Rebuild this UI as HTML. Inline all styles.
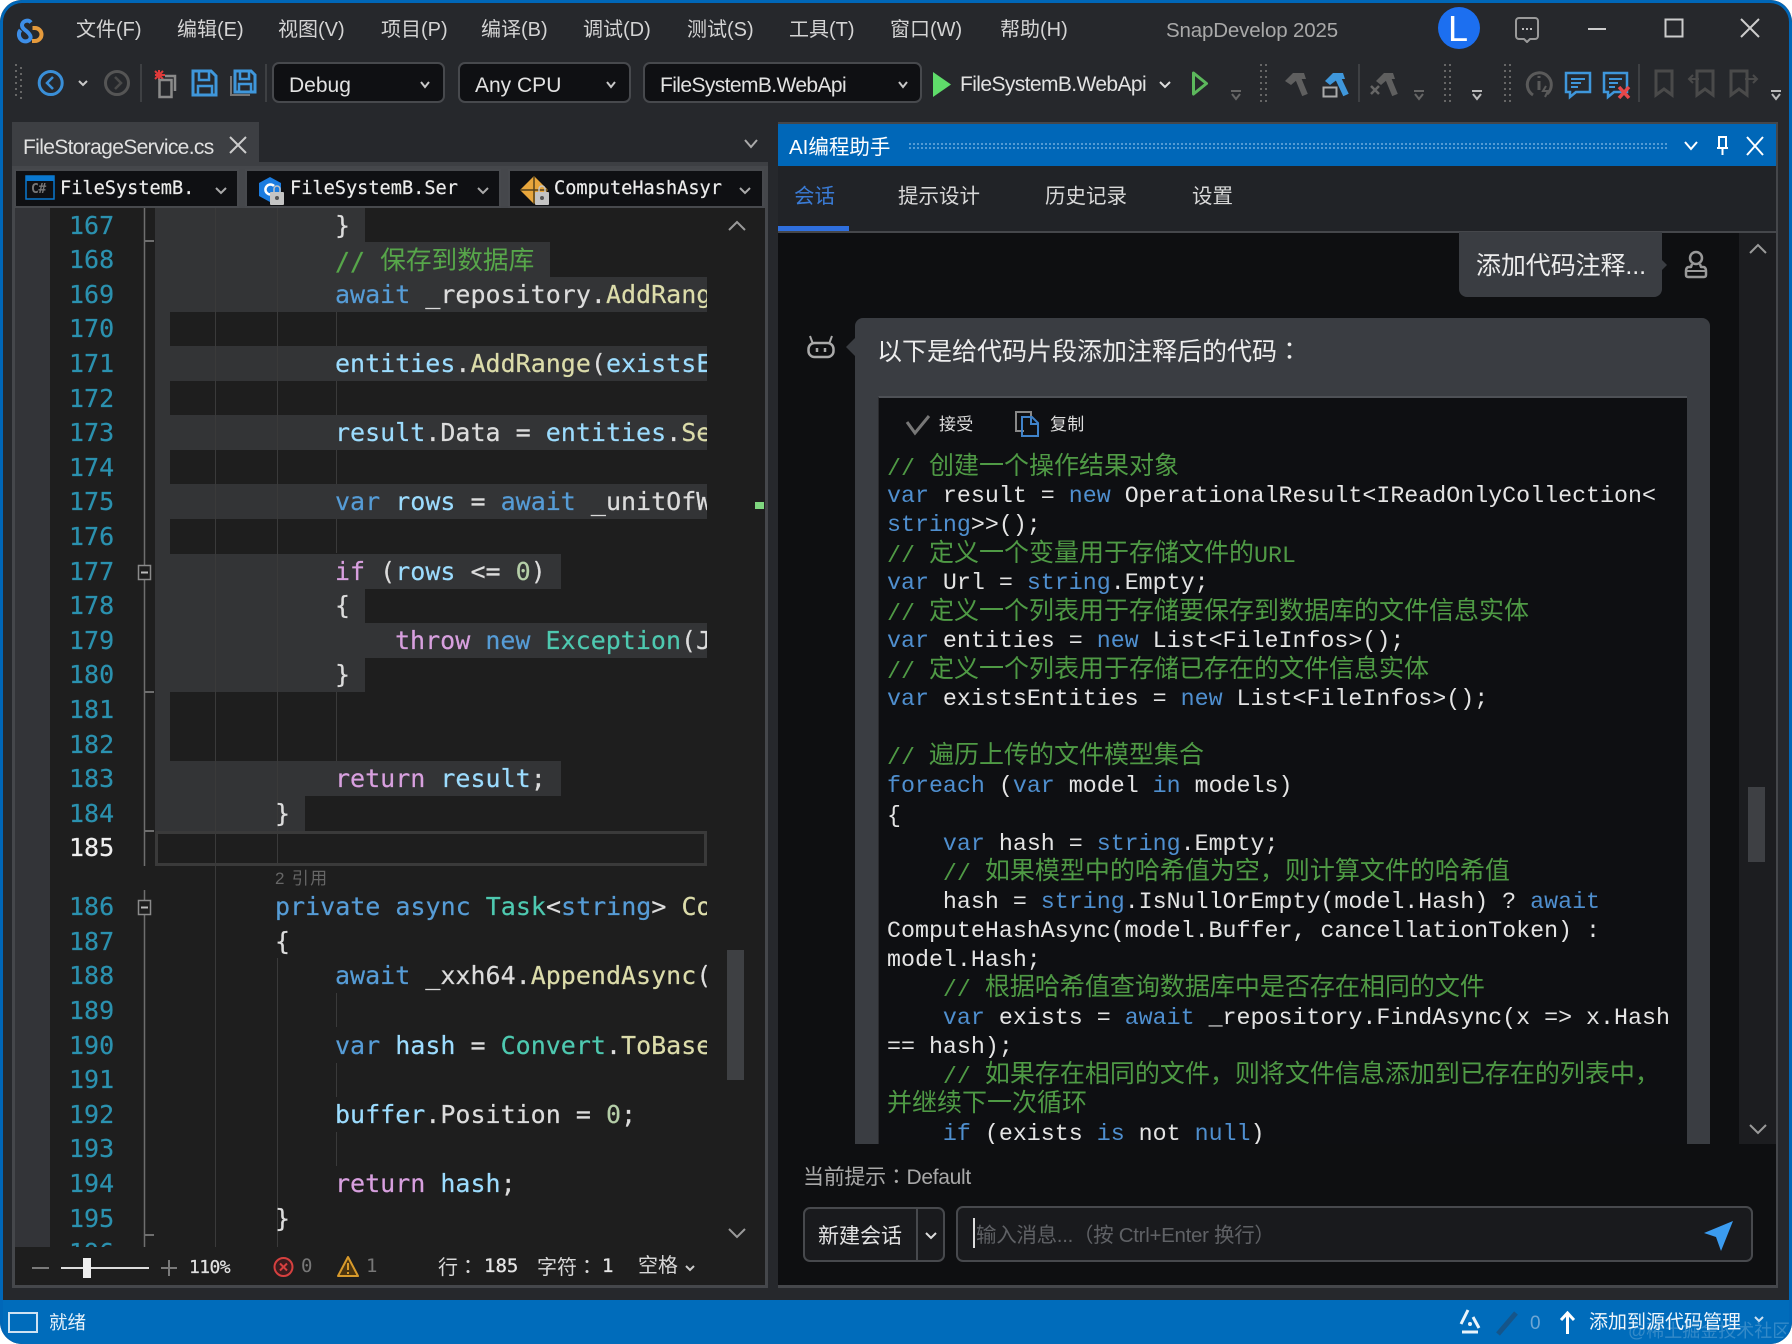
<!DOCTYPE html>
<html lang="zh"><head><meta charset="utf-8"><title>SnapDevelop 2025</title>
<style>
html,body{margin:0;padding:0;background:#fff}
#w{position:absolute;left:0;top:0;width:1792px;height:1344px;overflow:hidden;background:#26282c;border-radius:22px;font-family:"Liberation Sans","Noto Sans CJK SC",sans-serif;color:#d8d8d8}
#w div,#w span.a,#w svg{position:absolute}
.t{white-space:nowrap;line-height:1}
.m{font-size:20px;top:20px;color:#d4d4d4}
.dd{background:#0f1013;border:2px solid #47494d;border-radius:7px;box-sizing:border-box;top:62px;height:41px}
.ddt{font-size:21px;top:75px;color:#e2e2e2;white-space:nowrap;line-height:1}
.nav{background:#0f1013;border:2px solid #47494d;box-sizing:border-box;top:169px;height:39px}
.navt{font:18.6px/1 "DejaVu Sans Mono",monospace;top:180px;color:#ececec;white-space:pre;-webkit-text-stroke:.2px #ececec}
.sel{background:#333436;height:35px}
.g{width:1px;background:#3a3a3a}
.n{left:69px;font:25px/35px "DejaVu Sans Mono",monospace;color:#2b91af;height:35px;white-space:pre;-webkit-text-stroke:.2px #2b91af}
.l{font:25px/35px "DejaVu Sans Mono","Noto Sans CJK SC",monospace;color:#dcdcdc;white-space:pre;height:35px;-webkit-text-stroke:.2px}
.k{color:#569cd6}.f{color:#d8a0df}.v{color:#9cdcfe}.y{color:#dcdcaa}.e{color:#4ec9b0}.u{color:#b5cea8}.c{color:#57a64a}
.c b{font-weight:normal;font-family:"Noto Sans CJK SC",sans-serif}
#ed .c b{font-size:25.7px;position:relative;top:-1px;-webkit-text-stroke:0}
.cl{left:32px;font:23.3px/30px "Liberation Mono","Noto Sans CJK SC",monospace;color:#e4e4e4;white-space:pre;height:30px}
.cl .k{color:#4f8fcf}
.cl .c{color:#4f9a45}
.cl .c b{font-size:25px;position:relative;top:-1px}
.tab{font-size:20.5px;top:187px;color:#d8d8d8}
.tc{font-family:"Noto Sans CJK TC",sans-serif}
</style></head><body>
<div id="w">

<!-- menu -->
<div class="t m" style="left:76px">文件(F)</div>
<div class="t m" style="left:177px">编辑(E)</div>
<div class="t m" style="left:278px">视图(V)</div>
<div class="t m" style="left:381px">项目(P)</div>
<div class="t m" style="left:481px">编译(B)</div>
<div class="t m" style="left:583px">调试(D)</div>
<div class="t m" style="left:687px">测试(S)</div>
<div class="t m" style="left:789px">工具(T)</div>
<div class="t m" style="left:890px">窗口(W)</div>
<div class="t m" style="left:1000px">帮助(H)</div>
<div class="t m" style="left:1166px;color:#a9a9a9;top:21px;font-size:20.5px;letter-spacing:-.15px">SnapDevelop 2025</div>
<div style="left:1438px;top:7px;width:42px;height:42px;border-radius:50%;background:#1c6ff0"></div>
<div class="t" style="left:1448px;top:11px;font-size:36px;color:#fff">L</div>

<!-- toolbar dropdowns -->
<div class="dd" style="left:272px;width:173px"></div>
<div class="dd" style="left:458px;width:173px"></div>
<div class="dd" style="left:643px;width:279px"></div>
<div class="ddt" style="left:289px">Debug</div>
<div class="ddt" style="left:475px">Any CPU</div>
<div class="ddt" style="left:660px;letter-spacing:-.6px">FileSystemB.WebApi</div>
<div class="ddt" style="left:960px;letter-spacing:-.6px;top:74px">FileSystemB.WebApi</div>

<!-- tab well -->
<div style="left:12px;top:122px;width:247px;height:42px;background:#3d3f43"></div>
<div class="t" style="left:23px;top:137px;font-size:21px;color:#e0e0e0;letter-spacing:-.65px">FileStorageService.cs</div>
<div style="left:12px;top:162px;width:756px;height:7px;background:#3d3f43"></div>

<!-- editor panel -->
<div style="left:12px;top:166px;width:756px;height:1122px;background:#45474b"></div>
<div style="left:15px;top:208px;width:750px;height:1077px;background:#1e1e1e"></div>
<div style="left:15px;top:208px;width:35px;height:1039px;background:#333438"></div>

<div id="ed" style="left:0;top:207.7px;width:707px;height:1039.300px;overflow:hidden">
 <div class="sel" style="left:155px;top:0;width:210px"></div>
 <div class="sel" style="left:155px;top:34.6px;width:395px"></div>
 <div class="sel" style="left:155px;top:69.2px;width:552px"></div>
 <div class="sel" style="left:155px;top:103.8px;width:15px"></div>
 <div class="sel" style="left:155px;top:138.4px;width:552px"></div>
 <div class="sel" style="left:155px;top:173px;width:15px"></div>
 <div class="sel" style="left:155px;top:207.6px;width:552px"></div>
 <div class="sel" style="left:155px;top:242.2px;width:15px"></div>
 <div class="sel" style="left:155px;top:276.8px;width:552px"></div>
 <div class="sel" style="left:155px;top:311.4px;width:15px"></div>
 <div class="sel" style="left:155px;top:346px;width:406px"></div>
 <div class="sel" style="left:155px;top:380.6px;width:210px"></div>
 <div class="sel" style="left:155px;top:415.2px;width:552px"></div>
 <div class="sel" style="left:155px;top:449.8px;width:210px"></div>
 <div class="sel" style="left:155px;top:484.4px;width:15px"></div>
 <div class="sel" style="left:155px;top:519px;width:15px"></div>
 <div class="sel" style="left:155px;top:553.6px;width:406px"></div>
 <div class="sel" style="left:155px;top:588.2px;width:150px"></div>
 <div style="left:155px;top:623px;width:552px;height:35px;box-sizing:border-box;border:3px solid #3a3a3a"></div>

 <div class="g" style="left:215px;top:0;height:1040px"></div>
 <div class="g" style="left:277px;top:0;height:658px"></div>
 <div class="g" style="left:277px;top:750px;height:289px"></div>
 <div class="g" style="left:336px;top:104px;height:34px"></div>
 <div class="g" style="left:336px;top:173px;height:34px"></div>
 <div class="g" style="left:336px;top:242px;height:34px"></div>
 <div class="g" style="left:336px;top:311px;height:34px"></div>
 <div class="g" style="left:336px;top:484px;height:69px"></div>
 <div class="g" style="left:336px;top:785px;height:34px"></div>
 <div class="g" style="left:336px;top:855px;height:34px"></div>
 <div class="g" style="left:336px;top:924px;height:34px"></div>

 <div class="n" style="top:0">167</div>
 <div class="n" style="top:34.6px">168</div>
 <div class="n" style="top:69.2px">169</div>
 <div class="n" style="top:103.8px">170</div>
 <div class="n" style="top:138.4px">171</div>
 <div class="n" style="top:173px">172</div>
 <div class="n" style="top:207.6px">173</div>
 <div class="n" style="top:242.2px">174</div>
 <div class="n" style="top:276.8px">175</div>
 <div class="n" style="top:311.4px">176</div>
 <div class="n" style="top:346px">177</div>
 <div class="n" style="top:380.6px">178</div>
 <div class="n" style="top:415.2px">179</div>
 <div class="n" style="top:449.8px">180</div>
 <div class="n" style="top:484.4px">181</div>
 <div class="n" style="top:519px">182</div>
 <div class="n" style="top:553.6px">183</div>
 <div class="n" style="top:588.2px">184</div>
 <div class="n" style="top:622.8px;color:#eee;-webkit-text-stroke:.2px #eee">185</div>
 <div class="n" style="top:681.6px">186</div>
 <div class="n" style="top:716.2px">187</div>
 <div class="n" style="top:750.8px">188</div>
 <div class="n" style="top:785.4px">189</div>
 <div class="n" style="top:820px">190</div>
 <div class="n" style="top:854.6px">191</div>
 <div class="n" style="top:889.2px">192</div>
 <div class="n" style="top:923.8px">193</div>
 <div class="n" style="top:958.4px">194</div>
 <div class="n" style="top:993px">195</div>
 <div class="n" style="top:1027.6px">196</div>

 <div class="l" style="left:335px;top:0">}</div>
 <div class="l" style="left:335px;top:34.6px"><span class="c">// <b>保存到数据库</b></span></div>
 <div class="l" style="left:335px;top:69.2px"><span class="k">await</span> _repository.<span class="y">AddRange</span>(</div>
 <div class="l" style="left:335px;top:138.4px"><span class="v">entities</span>.<span class="y">AddRange</span>(<span class="v">existsEntities</span></div>
 <div class="l" style="left:335px;top:207.6px"><span class="v">result</span>.Data = <span class="v">entities</span>.<span class="y">Select</span></div>
 <div class="l" style="left:335px;top:276.8px"><span class="k">var</span> <span class="v">rows</span> = <span class="k">await</span> _unitOfWork</div>
 <div class="l" style="left:335px;top:346px"><span class="f">if</span> (<span class="v">rows</span> &lt;= <span class="u">0</span>)</div>
 <div class="l" style="left:335px;top:380.6px">{</div>
 <div class="l" style="left:395px;top:415.2px"><span class="f">throw</span> <span class="k">new</span> <span class="e">Exception</span>(Json</div>
 <div class="l" style="left:335px;top:449.8px">}</div>
 <div class="l" style="left:335px;top:553.6px"><span class="f">return</span> <span class="v">result</span>;</div>
 <div class="l" style="left:275px;top:588.2px">}</div>
 <div class="l" style="left:275px;top:681.6px"><span class="k">private</span> <span class="k">async</span> <span class="e">Task</span>&lt;<span class="k">string</span>&gt; <span class="y">Compute</span></div>
 <div class="l" style="left:275px;top:716.2px">{</div>
 <div class="l" style="left:335px;top:750.8px"><span class="k">await</span> _xxh64.<span class="y">AppendAsync</span>(</div>
 <div class="l" style="left:335px;top:820px"><span class="k">var</span> <span class="v">hash</span> = <span class="e">Convert</span>.<span class="y">ToBase64</span></div>
 <div class="l" style="left:335px;top:889.2px"><span class="v">buffer</span>.Position = <span class="u">0</span>;</div>
 <div class="l" style="left:335px;top:958.4px"><span class="f">return</span> <span class="v">hash</span>;</div>
 <div class="l" style="left:275px;top:993px">}</div>
</div>
<div class="t" style="left:275px;top:870px;font-size:17px;color:#666;letter-spacing:1.3px">2 引用</div>

<!-- editor bottom bar -->
<div style="left:15px;top:1247px;width:750px;height:38px;background:#1e1e1e"></div>
<div class="t" style="left:189px;top:1259px;font:18px/1 'DejaVu Sans Mono',monospace;color:#e0e0e0;letter-spacing:-.6px;-webkit-text-stroke:.2px #e0e0e0">110%</div>
<div class="t" style="left:301px;top:1257px;font:19px/1 'DejaVu Sans Mono',monospace;color:#777">0</div>
<div class="t" style="left:366px;top:1257px;font:19px/1 'DejaVu Sans Mono',monospace;color:#777">1</div>
<div class="t" style="left:438px;top:1256px;font-size:20px;color:#d8d8d8">行<span class="tc" lang="zh-TW">：</span></div>
<div class="t" style="left:484px;top:1257px;font:19px/1 'DejaVu Sans Mono',monospace;color:#e4e4e4;-webkit-text-stroke:.3px #e4e4e4">185</div>
<div class="t" style="left:537px;top:1256px;font-size:20px;color:#d8d8d8">字符<span class="tc" lang="zh-TW">：</span></div>
<div class="t" style="left:602px;top:1257px;font:19px/1 'DejaVu Sans Mono',monospace;color:#e4e4e4;-webkit-text-stroke:.3px #e4e4e4">1</div>
<div class="t" style="left:638px;top:1256px;font-size:20px;color:#d8d8d8">空格</div>

<!-- nav bars -->
<div class="nav" style="left:14px;width:225px"></div>
<div class="nav" style="left:245px;width:256px"></div>
<div class="nav" style="left:508px;width:256px"></div>
<div class="navt" style="left:60px">FileSystemB.</div>
<div class="navt" style="left:290px">FileSystemB.Ser</div>
<div class="navt" style="left:554px">ComputeHashAsyr</div>
<div class="t" style="left:31px;top:183px;font:bold 13px/1 'DejaVu Sans Mono',monospace;color:#777;letter-spacing:-.5px">C#</div>

<!-- AI panel -->
<div style="left:778px;top:122px;width:1000px;height:1166px;background:#45474b"></div>
<div style="left:778px;top:124px;width:998px;height:42px;background:#0067b8"></div>
<div class="t" style="left:789px;top:138px;font-size:20.5px;color:#fff">AI编程助手</div>
<div style="left:908px;top:142px;width:760px;height:9px;background-image:radial-gradient(#5a9fd6 1px,transparent 1.2px);background-size:4px 4px"></div>
<div style="left:778px;top:166px;width:998px;height:65px;background:#212327"></div>
<div style="left:778px;top:226px;width:71px;height:5px;background:#2f6fde"></div>
<div class="t tab" style="left:794px;color:#3a7bd5">会话</div>
<div class="t tab" style="left:898px">提示设计</div>
<div class="t tab" style="left:1045px">历史记录</div>
<div class="t tab" style="left:1192px">设置</div>
<div style="left:778px;top:233px;width:998px;height:1052px;background:#0e0f11"></div>
<div style="left:1739px;top:233px;width:37px;height:911px;background:#1c1d20"></div>
<div style="left:1748px;top:787px;width:17px;height:75px;background:#3e4044"></div>

<div style="left:1459px;top:232px;width:203px;height:65px;background:#3a3d42;border-radius:0 0 8px 8px"></div>
<div style="left:1657px;top:255px;width:10px;height:20px;background:#3a3d42;clip-path:polygon(0 0,100% 50%,0 100%)"></div>
<div class="t" style="left:1476px;top:254px;font-size:25px;color:#ececec;letter-spacing:-.1px">添加代码注释...</div>

<div style="left:855px;top:318px;width:855px;height:826px;background:#3a3d42;border-radius:8px 8px 0 0"></div>
<div style="left:846px;top:337px;width:10px;height:20px;background:#3a3d42;clip-path:polygon(100% 0,0 50%,100% 100%)"></div>
<div class="t" style="left:877px;top:338px;font-size:25px;color:#ececec">以下是给代码片段添加注释后的代码<span class="tc" lang="zh-TW">：</span></div>
<div style="left:878px;top:396px;width:809px;height:748px;background:#0e0f12;border-top:2px solid #4e5156;border-left:1px solid #2a2b2e;box-sizing:border-box"></div>
<div class="t" style="left:939px;top:416px;font-size:17px;color:#ddd;letter-spacing:.3px">接受</div>
<div class="t" style="left:1050px;top:416px;font-size:17px;color:#ddd;letter-spacing:.3px">复制</div>

<div style="left:855px;top:318px;width:855px;height:826px;overflow:hidden">
 <div class="cl" style="top:132px"><span class="c">// <b>创建一个操作结果对象</b></span></div>
 <div class="cl" style="top:163px"><span class="k">var</span> result = <span class="k">new</span> OperationalResult&lt;IReadOnlyCollection&lt;</div>
 <div class="cl" style="top:192px"><span class="k">string</span>&gt;&gt;();</div>
 <div class="cl" style="top:219px"><span class="c">// <b>定义一个变量用于存储文件的</b>URL</span></div>
 <div class="cl" style="top:250px"><span class="k">var</span> Url = <span class="k">string</span>.Empty;</div>
 <div class="cl" style="top:277px"><span class="c">// <b>定义一个列表用于存储要保存到数据库的文件信息实体</b></span></div>
 <div class="cl" style="top:308px"><span class="k">var</span> entities = <span class="k">new</span> List&lt;FileInfos&gt;();</div>
 <div class="cl" style="top:334.500px"><span class="c">// <b>定义一个列表用于存储已存在的文件信息实体</b></span></div>
 <div class="cl" style="top:366px"><span class="k">var</span> existsEntities = <span class="k">new</span> List&lt;FileInfos&gt;();</div>
 <div class="cl" style="top:421px"><span class="c">// <b>遍历上传的文件模型集合</b></span></div>
 <div class="cl" style="top:453px"><span class="k">foreach</span> (<span class="k">var</span> model <span class="k">in</span> models)</div>
 <div class="cl" style="top:483px">{</div>
 <div class="cl" style="top:511px">    <span class="k">var</span> hash = <span class="k">string</span>.Empty;</div>
 <div class="cl" style="top:537px">    <span class="c">// <b>如果模型中的哈希值为空，则计算文件的哈希值</b></span></div>
 <div class="cl" style="top:569px">    hash = <span class="k">string</span>.IsNullOrEmpty(model.Hash) ? <span class="k">await</span></div>
 <div class="cl" style="top:598px">ComputeHashAsync(model.Buffer, cancellationToken) :</div>
 <div class="cl" style="top:627px">model.Hash;</div>
 <div class="cl" style="top:653px">    <span class="c">// <b>根据哈希值查询数据库中是否存在相同的文件</b></span></div>
 <div class="cl" style="top:685px">    <span class="k">var</span> exists = <span class="k">await</span> _repository.FindAsync(x =&gt; x.Hash</div>
 <div class="cl" style="top:714px">== hash);</div>
 <div class="cl" style="top:740px">    <span class="c">// <b>如果存在相同的文件，则将文件信息添加到已存在的列表中，</b></span></div>
 <div class="cl" style="top:769px"><span class="c"><b>并继续下一次循环</b></span></div>
 <div class="cl" style="top:801px">    <span class="k">if</span> (exists <span class="k">is</span> not <span class="k">null</span>)</div>
</div>

<div class="t" style="left:803px;top:1166px;font-size:21px;color:#a8a8a8;letter-spacing:-.3px">当前提示<span class="tc" lang="zh-TW">：</span><span>Default</span></div>
<div style="left:803px;top:1207px;width:142px;height:55px;box-sizing:border-box;border:2px solid #47494d;border-radius:7px;background:#191a1d"></div>
<div style="left:916px;top:1208px;width:2px;height:53px;background:#47494d"></div>
<div class="t" style="left:818px;top:1226px;font-size:21px;color:#e2e2e2">新建会话</div>
<div style="left:956px;top:1206px;width:797px;height:56px;box-sizing:border-box;border:2px solid #47494d;border-radius:7px;background:#191a1d"></div>
<div style="left:973px;top:1218px;width:2px;height:30px;background:#ddd"></div>
<div class="t" style="left:976px;top:1226px;font-size:20.5px;color:#5f6165;letter-spacing:-.3px">输入消息...（按 Ctrl+Enter 换行）</div>

<!-- status bar -->
<div style="left:0;top:1300px;width:1792px;height:44px;background:#006cbb"></div>
<div style="left:8px;top:1312px;border:2px solid #cfe2f2;width:26px;height:17px"></div>
<div class="t" style="left:49px;top:1314px;font-size:18.5px;color:#e8f2fa">就绪</div>
<div class="t" style="left:1530px;top:1314px;font-size:19px;color:#6ea6d4">0</div>
<div class="t" style="left:1589px;top:1313px;font-size:19px;color:#f0f6fb">添加到源代码管理</div>
<div class="t" style="left:1628px;top:1322px;font-size:18px;color:rgba(255,255,255,.2)">@稀土掘金技术社区</div>

<!-- all vector icons -->
<svg width="1792" height="1344" viewBox="0 0 1792 1344" style="left:0;top:0" fill="none">
 <!-- logo -->
 <path d="M31 22.500c-3-3.500-9-1.500-9 3 0 3 3.500 4.500 6 7 2 2 3 3.500 2.500 5.500-1 3.500-6 4.500-9 2-3-2.500-3.500-7-1-10" stroke="#3d8ee8" stroke-width="4"/>
 <path d="M32.500 28h2.500a6.500 6.500 0 0 1 0 13h-3" stroke="#e59a3c" stroke-width="4"/>
 <!-- title right -->
 <path d="M1519 18h16a3 3 0 0 1 3 3v15a3 3 0 0 1-3 3h-5l-3 3-3-3h-5a3 3 0 0 1-3-3v-15a3 3 0 0 1 3-3z" stroke="#9a9a9a" stroke-width="2" stroke-linejoin="round"/>
 <path d="M1522 29h2M1526 29h2M1530 29h2" stroke="#bbb" stroke-width="2"/>
 <path d="M1588 29h18" stroke="#ccc" stroke-width="2"/>
 <rect x="1665.500" y="19.500" width="17" height="17" stroke="#ccc" stroke-width="2"/>
 <path d="M1741 19l18 18M1759 19l-18 18" stroke="#ccc" stroke-width="2"/>
 <!-- toolbar left -->
 <path d="M16 64v36M21 67v36" stroke="#666" stroke-width="2" stroke-dasharray="2 4"/>
 <circle cx="50.700" cy="83" r="11.500" stroke="#3a8fd8" stroke-width="3"/>
 <path d="M53 77l-6 6 6 6" stroke="#3a8fd8" stroke-width="2.500"/>
 <path d="M79 81l4 4 4-4" stroke="#c8c8c8" stroke-width="2"/>
 <circle cx="117" cy="83" r="11.500" stroke="#555" stroke-width="3"/>
 <path d="M115 77l6 6-6 6" stroke="#4a4a4a" stroke-width="2.500"/>
 <path d="M141 64v38M266 64v38" stroke="#47494b" stroke-width="1.500"/>
 <path d="M155 75h10M159 70v10M155 71l8 8M163 71l-8 8" stroke="#e03a3a" stroke-width="2"/>
 <rect x="159.500" y="80" width="12" height="17" stroke="#8a8a8a" stroke-width="2.500"/>
 <path d="M165 76h10v15" stroke="#8a8a8a" stroke-width="2.500"/>
 <path d="M193 71h18l5 5v19h-23z" stroke="#3f97db" stroke-width="3"/>
 <path d="M199 71v9h10v-9M198 95v-9h14v9" stroke="#3f97db" stroke-width="2.500"/>
 <path d="M231 76v19h19" stroke="#777" stroke-width="2"/>
 <path d="M235 71h16l4 4v17h-20z" stroke="#3f97db" stroke-width="3"/>
 <path d="M240 71v8h9v-8M239 92v-8h12v8" stroke="#3f97db" stroke-width="2.500"/>
 <path d="M421 82l4 5 4-5M607 82l4 5 4-5M899 82l4 5 4-5" stroke="#c8c8c8" stroke-width="2"/>
 <path d="M933 72l18 12.500-18 12.500z" fill="#5fdc6a"/>
 <path d="M1160 82l5 5 5-5" stroke="#ddd" stroke-width="2"/>
 <path d="M1193.500 73l13 10.500-13 10.500z" stroke="#5cb85c" stroke-width="3" stroke-linejoin="round"/>
 <path d="M1231 91h10M1232 94l4 5 4-5" stroke="#666" stroke-width="2"/>
 <path d="M1261 64v38M1266 64v38" stroke="#666" stroke-width="2" stroke-dasharray="2 4"/>
 <!-- hammers -->
 <path d="M1285 81l8-8h11l2 6h-8l-7 6z" fill="#5f5f5f"/>
 <path d="M1298 78l7 17" stroke="#5f5f5f" stroke-width="6"/>
 <path d="M1325 81l8-8h10l2 6h-7l-8 6z" fill="#3f97db"/>
 <path d="M1338 78l8 17" stroke="#3f97db" stroke-width="6"/>
 <rect x="1323.500" y="87.500" width="13" height="9" fill="#26282c" stroke="#aaa" stroke-width="2"/>
 <path d="M1359 64v38" stroke="#47494b" stroke-width="1.500"/>
 <path d="M1376 81l8-8h9l2 6h-7l-7 6z" fill="#5f5f5f"/>
 <path d="M1388 78l7 17" stroke="#5f5f5f" stroke-width="6"/>
 <path d="M1371 86l8 8M1379 86l-8 8" stroke="#666" stroke-width="2.500"/>
 <path d="M1414 91h10M1415 94l4 5 4-5" stroke="#666" stroke-width="2"/>
 <path d="M1445 64v38M1450 64v38" stroke="#666" stroke-width="2" stroke-dasharray="2 4"/>
 <path d="M1472 91h10M1473 94l4 5 4-5" stroke="#bbb" stroke-width="2"/>
 <path d="M1505 64v38M1510 64v38" stroke="#666" stroke-width="2" stroke-dasharray="2 4"/>
 <path d="M1547 94a12 12 0 1 0-14 1" stroke="#5a5a5a" stroke-width="3"/>
 <path d="M1539 76v2M1539 81v9" stroke="#5a5a5a" stroke-width="3"/>
 <path d="M1546 86l-3 5h5l-3 6" stroke="#5a5a5a" stroke-width="2"/>
 <path d="M1566 73h24v19h-14l-6 5v-5h-4z" stroke="#3f97db" stroke-width="2.500"/>
 <path d="M1571 79h14M1571 83h10M1571 87h7" stroke="#3f97db" stroke-width="2"/>
 <path d="M1604 73h23v19h-13l-6 5v-5h-4z" stroke="#3f97db" stroke-width="2.500"/>
 <path d="M1609 79h13M1609 83h9M1609 87h6" stroke="#3f97db" stroke-width="2"/>
 <path d="M1619 87l10 11M1629 87l-10 11" stroke="#e8484a" stroke-width="3.500"/>
 <path d="M1639 64v38" stroke="#47494b" stroke-width="1.500"/>
 <path d="M1656 71h16v24l-8-6-8 6z" stroke="#4a4a4a" stroke-width="3"/>
 <path d="M1697 71h16v24l-8-6-8 6z" stroke="#4a4a4a" stroke-width="3"/>
 <path d="M1699 79h-10M1693 75l-4 4 4 4" stroke="#4a4a4a" stroke-width="2"/>
 <path d="M1731 71h16v24l-8-6-8 6z" stroke="#4a4a4a" stroke-width="3"/>
 <path d="M1745 79h12M1753 75l4 4-4 4" stroke="#4a4a4a" stroke-width="2"/>
 <path d="M1771 91h10M1772 94l4 5 4-5" stroke="#bbb" stroke-width="2"/>
 <!-- tab -->
 <path d="M230 137l16 16M246 137l-16 16" stroke="#ccc" stroke-width="2"/>
 <path d="M745 140l6 7 6-7" stroke="#aaa" stroke-width="2"/>
 <!-- nav icons -->
 <rect x="26" y="176" width="28" height="23" stroke="#0a78cf" stroke-width="1.500"/>
 <rect x="26" y="176" width="28" height="5" fill="#0a78cf"/>
 <path d="M216 188l5 5 5-5M478 188l5 5 5-5M740 188l5 5 5-5" stroke="#aaa" stroke-width="2"/>
 <path d="M270 177l11 6v13l-11 6-11-6v-13z" fill="#1b7ce0"/>
 <path d="M274 186a5 5 0 1 0 0 7" stroke="#fff" stroke-width="2.500"/>
 <rect x="270" y="192" width="14" height="13" rx="1" fill="#c4c4c4"/>
 <path d="M274 192v-3a3 3 0 0 1 6 0v3" stroke="#c4c4c4" stroke-width="1.500"/>
 <circle cx="277" cy="198" r="2" fill="#555"/>
 <path d="M534 176l14 14-14 14-14-14z" fill="#e8a63c"/>
 <path d="M534 176v28M520 190h28" stroke="#54401a" stroke-width="1.500"/>
 <rect x="535" y="192" width="14" height="13" rx="1" fill="#c4c4c4"/>
 <path d="M539 192v-3a3 3 0 0 1 6 0v3" stroke="#c4c4c4" stroke-width="1.500"/>
 <circle cx="542" cy="198" r="2" fill="#555"/>
 <!-- editor margin -->
 <path d="M144.500 208V866M144.500 890V1247" stroke="#6e6e6e" stroke-width="1.500"/>
 <path d="M144 241h10M144 692h10M144 831h10M144 1235h10" stroke="#6e6e6e" stroke-width="2"/>
 <rect x="138.500" y="565.500" width="12" height="14" fill="#1e1e1e" stroke="#8a8a8a" stroke-width="1.500"/>
 <path d="M141 572.500h7" stroke="#bbb" stroke-width="2"/>
 <rect x="138.500" y="900.500" width="12" height="14" fill="#1e1e1e" stroke="#8a8a8a" stroke-width="1.500"/>
 <path d="M141 907.500h7" stroke="#bbb" stroke-width="2"/>
 <rect x="755" y="502" width="9" height="7" fill="#7fd67f"/>
 <rect x="727" y="950" width="17" height="130" fill="#3e4043"/>
 <path d="M729 230l8-8 8 8" stroke="#9a9a9a" stroke-width="2"/>
 <path d="M729 1229l8 8 8-8" stroke="#9a9a9a" stroke-width="2"/>
 <!-- editor status -->
 <path d="M32 1268h17M161 1268h16M169 1260v16" stroke="#7a7a7a" stroke-width="2"/>
 <path d="M61 1268h88" stroke="#ddd" stroke-width="2"/>
 <rect x="83" y="1258" width="8" height="20" fill="#eee"/>
 <circle cx="283.500" cy="1267" r="9" fill="#3a1c1e" stroke="#d6403f" stroke-width="2"/>
 <path d="M280 1263.500l7 7M287 1263.500l-7 7" stroke="#d6403f" stroke-width="2"/>
 <path d="M348 1257l10 19h-20z" fill="#4a3410" stroke="#d89a2b" stroke-width="2" stroke-linejoin="round"/>
 <path d="M348 1263v7M348 1272v2" stroke="#d89a2b" stroke-width="2"/>
 <path d="M686 1266l4 4 4-4" stroke="#ccc" stroke-width="2"/>
 <!-- AI header icons -->
 <path d="M1685 142l6 7 6-7" stroke="#fff" stroke-width="2"/>
 <path d="M1719 137h7v11h-7zM1717 148h11M1722.500 148v7" stroke="#fff" stroke-width="2"/>
 <path d="M1747 137l16 18M1763 137l-16 18" stroke="#fff" stroke-width="2"/>
 <!-- scroll chevrons -->
 <path d="M1750 253l8-8 8 8" stroke="#9a9a9a" stroke-width="2"/>
 <path d="M1750 1125l8 8 8-8" stroke="#9a9a9a" stroke-width="2"/>
 <!-- user icon -->
 <circle cx="1696" cy="258" r="6" stroke="#999" stroke-width="2.500"/>
 <path d="M1692 264l-1 3h-2c-3 0-3 3-3 5v3c0 1.500 1 2 2 2h16c1 0 2-.5 2-2v-3c0-2 0-5-3-5h-2l-1-3" stroke="#999" stroke-width="2.500" stroke-linejoin="round"/>
 <path d="M1687 271h18" stroke="#999" stroke-width="2"/>
 <!-- bot icon -->
 <path d="M810 336l3 8M832 336l-3 8" stroke="#aaa" stroke-width="2"/>
 <rect x="808.500" y="343" width="25" height="14" rx="6" stroke="#aaa" stroke-width="2.500"/>
 <path d="M817 348v4M825 348v4" stroke="#aaa" stroke-width="2.500"/>
 <!-- accept/copy -->
 <path d="M907 422l8 11 14-17" stroke="#777" stroke-width="3"/>
 <path d="M1024 431h-8v-19h15v4" stroke="#888" stroke-width="2"/>
 <path d="M1022 417h10l6 6v13h-16z" stroke="#3f82c9" stroke-width="2"/>
 <path d="M1031 418v6h7" stroke="#3f82c9" stroke-width="2"/>
 <!-- bottom -->
 <path d="M926 1233l5 5 5-5" stroke="#ddd" stroke-width="2"/>
 <path d="M1733 1221l-29 12 12 4 5 14z" fill="#3b9cf0"/>
 <!-- status icons -->
 <path d="M1468 1310l-7 14M1473 1317l6 11M1462 1332h16" stroke="#eaf4fb" stroke-width="3"/>
 <circle cx="1470" cy="1324" r="2" fill="#eaf4fb"/>
 <path d="M1498 1334l18-21" stroke="#15558a" stroke-width="5"/>
 <path d="M1567.500 1334v-20M1561 1320l6.500-7 6.500 7" stroke="#fff" stroke-width="3"/>
 <path d="M1755 1317l4 4 4-4" stroke="#cfe2f2" stroke-width="2"/>
</svg>

<!-- window border -->
<div style="left:0;top:0;width:1792px;height:1344px;box-sizing:border-box;border:3px solid #0067b8;border-bottom:0;border-radius:22px"></div>
</div>
</body></html>
